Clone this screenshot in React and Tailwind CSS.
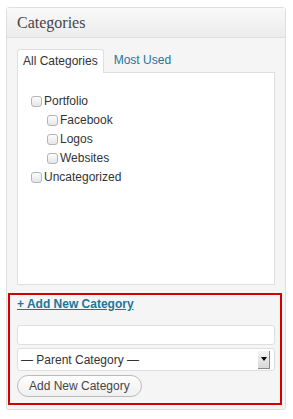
const categories = [
  { name: 'Portfolio', depth: 0 },
  { name: 'Facebook', depth: 1 },
  { name: 'Logos', depth: 1 },
  { name: 'Websites', depth: 1 },
  { name: 'Uncategorized', depth: 0 },
]

function Checkbox() {
  return (
    <span className="inline-block h-[11px] w-[11px] shrink-0 rounded-[3px] border border-[#b4b4b4] bg-gradient-to-b from-[#fdfdfd] to-[#e6e6e6]" />
  )
}

export default function App() {
  return (
    <div className="h-[419px] w-[293px] bg-white px-[6px] pt-[7px] font-['Liberation_Sans',Arial,sans-serif] text-[12px] text-[#333]">
      <div className="w-[280px] rounded-[3px] border border-[#dfdfdf] bg-[#f5f5f5]">
        <div className="flex h-[30px] items-center border-b border-[#dfdfdf] bg-gradient-to-b from-[#f9f9f9] to-[#ececec] px-[10px]">
          <h3 className="font-['Liberation_Serif',Georgia,serif] text-[16px] leading-none text-[#464646]">Categories</h3>
        </div>

        <div className="px-[10px] pt-[10px]">
          <div className="flex items-end">
            <div className="relative top-px rounded-t-[3px] border border-b-0 border-[#dfdfdf] bg-white px-[5px] pb-[5px] pt-[4px] leading-[14px]">
              All Categories
            </div>
            <div className="ml-[5px] px-[5px] pb-[5px] leading-[14px] text-[#21759b]">Most Used</div>
          </div>

          <div className="h-[213px] border border-[#dfdfdf] bg-white pl-[13px] pt-[19px]">
            {categories.map((c) => (
              <div
                key={c.name}
                className={`flex h-[19px] items-center gap-[2px] ${c.depth ? 'pl-[16px]' : ''}`}
              >
                <Checkbox />
                <span className="leading-[19px]">{c.name}</span>
              </div>
            ))}
          </div>
        </div>

        <div className="ml-px mt-[8px] w-[274px] border-2 border-[#d40000] px-[7px] pb-[6px] pt-[2px]">
          <a href="#" className="block font-bold leading-[15px] text-[#21759b] underline">
            + Add New Category
          </a>
          <div className="mt-[13px] h-[20px] w-[258px] rounded-[3px] border border-[#dfdfdf] bg-white" />
          <div className="mt-[3px] flex h-[23px] w-[258px] items-center justify-between rounded-[3px] border border-[#dfdfdf] bg-white pl-[3px] pr-[4px]">
            <span className="leading-none text-[#333]">— Parent Category —</span>
            <span className="flex h-[18px] w-[12px] items-center justify-center border-b border-r border-[#888] bg-gradient-to-b from-[#f4f4f4] to-[#d8d8d8]">
              <span className="h-0 w-0 border-x-[3px] border-t-[4px] border-x-transparent border-t-black" />
            </span>
          </div>
          <div className="mt-[4px] flex h-[22px] w-[125px] items-center rounded-full border border-[#bbb] bg-gradient-to-b from-[#fefefe] to-[#f0f0f0] pl-[11px] text-[#464646]">
            Add New Category
          </div>
        </div>
        <div className="h-[4px]" />
      </div>
    </div>
  )
}
